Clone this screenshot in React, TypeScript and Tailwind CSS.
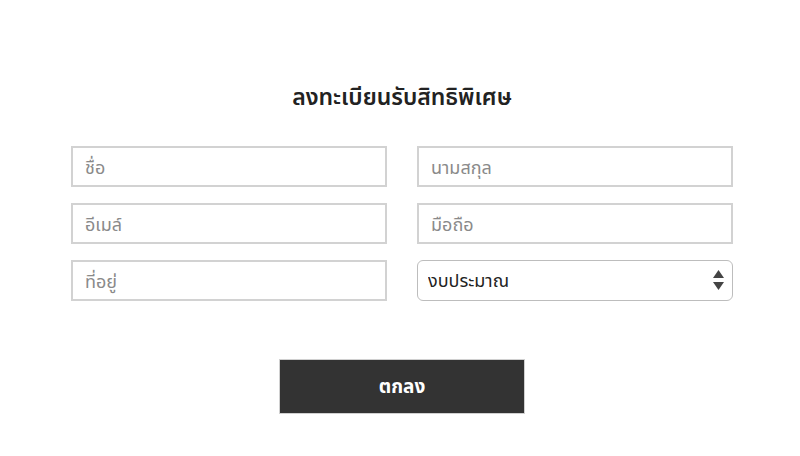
import { useState } from "react";

type FormState = {
  firstName: string;
  lastName: string;
  email: string;
  phone: string;
  address: string;
  budget: string;
};

const initialForm: FormState = {
  firstName: "",
  lastName: "",
  email: "",
  phone: "",
  address: "",
  budget: "",
};

const inputClass =
  "h-[41px] w-full border-2 border-[#d2d2d2] bg-white px-[12px] text-[18px] text-[#333] outline-none placeholder:text-[#8a8a8a]";

export default function App() {
  const [form, setForm] = useState<FormState>(initialForm);

  const update = (key: keyof FormState) => (value: string) =>
    setForm((current) => ({ ...current, [key]: value }));

  return (
    <div
      className="min-h-[456px] w-full bg-white"
      style={{ fontFamily: '"Noto Sans", "Noto Sans Thai", "Liberation Sans", sans-serif' }}
    >
      <div className="ml-[71px] w-[662px] pt-[80px]">
        <h1 className="text-center text-[23px] font-semibold leading-[32px] text-[#222]">
          ลงทะเบียนรับสิทธิพิเศษ
        </h1>

        <form
          className="mt-[34px] grid grid-cols-2 gap-x-[30px] gap-y-[16px]"
          onSubmit={(event) => event.preventDefault()}
        >
          <input
            className={inputClass}
            placeholder="ชื่อ"
            value={form.firstName}
            onChange={(e) => update("firstName")(e.target.value)}
          />
          <input
            className={inputClass}
            placeholder="นามสกุล"
            value={form.lastName}
            onChange={(e) => update("lastName")(e.target.value)}
          />
          <input
            className={inputClass}
            placeholder="อีเมล์"
            value={form.email}
            onChange={(e) => update("email")(e.target.value)}
          />
          <input
            className={inputClass}
            placeholder="มือถือ"
            value={form.phone}
            onChange={(e) => update("phone")(e.target.value)}
          />
          <input
            className={inputClass}
            placeholder="ที่อยู่"
            value={form.address}
            onChange={(e) => update("address")(e.target.value)}
          />
          <div className="relative">
            <select
              className="h-[41px] w-full appearance-none rounded-[6px] border border-[#bdbdbd] bg-white px-[10px] text-[18px] text-[#222] outline-none"
              value={form.budget}
              onChange={(e) => update("budget")(e.target.value)}
            >
              <option value="">งบประมาณ</option>
              <option value="1">ต่ำกว่า 1 ล้าน</option>
              <option value="2">1-3 ล้าน</option>
              <option value="3">มากกว่า 3 ล้าน</option>
            </select>
            <svg
              className="pointer-events-none absolute right-[9px] top-[10px]"
              width="11"
              height="20"
              viewBox="0 0 11 20"
            >
              <path d="M5.5 0 L11 8 H0 Z" fill="#444" />
              <path d="M0 12 H11 L5.5 20 Z" fill="#444" />
            </svg>
          </div>

          <div className="col-span-2 mt-[42px] flex justify-center">
            <button
              type="submit"
              className="h-[55px] w-[246px] border border-[#d0d0d0] bg-[#333] text-[19px] font-bold text-white"
            >
              ตกลง
            </button>
          </div>
        </form>
      </div>
    </div>
  );
}
